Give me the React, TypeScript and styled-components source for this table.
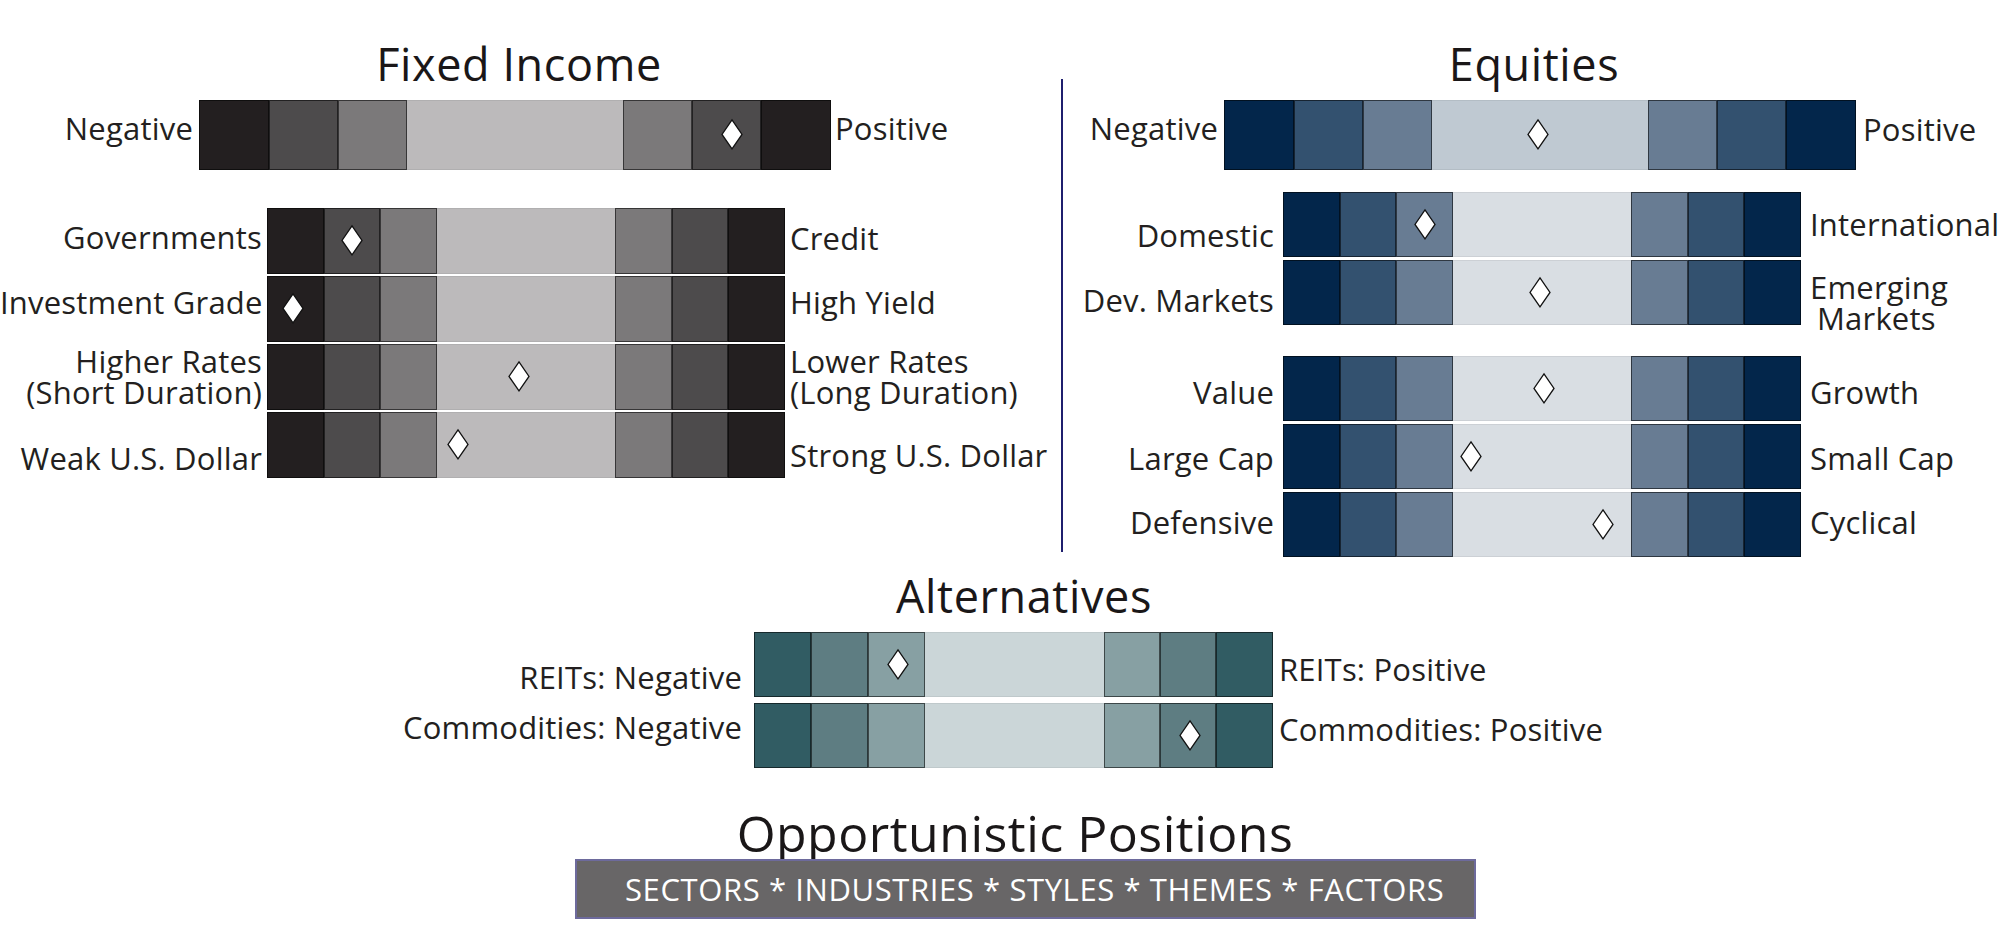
import type { ReactNode } from "react";
import styled, { createGlobalStyle } from "styled-components";

type Palette = { dark: string; mid: string; soft: string; center: string };

type Item = {
  left: ReactNode;
  right: ReactNode;
  seg: number;
  at: number;
  dyL?: number;
  dyR?: number;
};

const GREY: Palette = { dark: "#231f20", mid: "#4d4b4c", soft: "#7b797a", center: "#bcbabb" };
const NAVY_TOP: Palette = { dark: "#03264b", mid: "#33516f", soft: "#687c93", center: "#bfc9d2" };
const NAVY: Palette = { ...NAVY_TOP, center: "#d9dee3" };
const TEAL: Palette = { dark: "#315c63", mid: "#5e7d82", soft: "#87a0a3", center: "#cbd6d8" };

const WIDE = [70, 69, 69, 216, 69, 69, 70];
const NARROW = [57, 56, 57, 178, 57, 56, 57];
const ALT = [57, 57, 57, 179, 56, 56, 57];

const GlobalStyle = createGlobalStyle`
  html, body {
    margin: 0;
    padding: 0;
    background: #fff;
  }
  body {
    font-family: "Open Sans", "Liberation Sans", sans-serif;
    color: #231f20;
  }
`;

const StPage = styled.main`
  width: 2000px;
  height: 940px;
  overflow: hidden;
  display: flex;
  flex-direction: column;
  background: #fff;
`;

const StTopRow = styled.div`
  display: flex;
  align-items: flex-start;
  padding-top: 38px;
`;

const StPanel = styled.section<{ $w?: number }>`
  display: flex;
  flex-direction: column;
  ${({ $w }) => ($w ? `width: ${$w}px; flex-shrink: 0;` : "flex: 1; min-width: 0;")}
`;

const StDivider = styled.div`
  flex-shrink: 0;
  width: 2px;
  height: 473px;
  margin-top: 41px;
  background: #1f1f6e;
`;

const StSection = styled.section<{ $top: number }>`
  display: flex;
  flex-direction: column;
  margin-top: ${({ $top }) => $top}px;
`;

const StTitle = styled.h2<{ $nudge: number }>`
  margin: 0;
  font-size: 45px;
  font-weight: 400;
  line-height: 52px;
  letter-spacing: 0.6px;
  text-align: center;
  color: #1a1718;
  padding-left: ${({ $nudge }) => Math.max(0, $nudge)}px;
  padding-right: ${({ $nudge }) => Math.max(0, -$nudge)}px;
`;

const StBigTitle = styled(StTitle)`
  font-size: 50px;
  line-height: 50px;
  letter-spacing: 0.5px;
`;

const StStack = styled.div<{ $top: number; $gap: number }>`
  display: flex;
  flex-direction: column;
  gap: ${({ $gap }) => $gap}px;
  margin-top: ${({ $top }) => $top}px;
`;

const StRow = styled.div<{ $left: number }>`
  display: grid;
  grid-template-columns: ${({ $left }) => $left}px auto 1fr;
  align-items: center;
`;

const StLabel = styled.div<{ $align: "left" | "right"; $dy: number; $gap: number }>`
  font-size: 31px;
  line-height: 31px;
  letter-spacing: 0.2px;
  white-space: nowrap;
  text-align: ${({ $align }) => $align};
  color: #231f20;
  padding-${({ $align }) => ($align === "right" ? "right" : "left")}: ${({ $gap }) => $gap}px;
  transform: translateY(${({ $dy }) => $dy}px);
`;

const StIndent = styled.span`
  display: inline-block;
  padding-left: 7px;
`;

const StBar = styled.div<{ $h: number }>`
  position: relative;
  display: flex;
  height: ${({ $h }) => $h}px;
`;

const StSegment = styled.div<{ $w: number; $color: string; $middle: boolean }>`
  box-sizing: border-box;
  width: ${({ $w }) => $w}px;
  height: 100%;
  background: ${({ $color }) => $color};
  border: 1px solid ${({ $middle }) => ($middle ? "rgba(0, 0, 0, 0.06)" : "rgba(0, 0, 0, 0.55)")};
  ${({ $middle }) => ($middle ? "border-left: none; border-right: none;" : "")}
`;

const StMarker = styled.svg`
  position: absolute;
  top: 50%;
  width: 22px;
  height: 31px;
  margin-left: -11px;
  transform: translateY(-52%);
  overflow: visible;

  polygon {
    fill: #fff;
    stroke: #111;
    stroke-width: 1.3;
    stroke-linejoin: miter;
  }
`;

const StBanner = styled.div`
  box-sizing: border-box;
  align-self: flex-start;
  margin-left: 575px;
  margin-top: 1px;
  width: 901px;
  height: 60px;
  padding-left: 48px;
  display: flex;
  align-items: center;
  background: #686667;
  border: 2px solid #6d6a9c;
  color: #fff;
  font-size: 31px;
  letter-spacing: 0.6px;
  white-space: nowrap;
`;

function Scale({
  widths,
  palette,
  seg,
  at,
  height,
}: {
  widths: number[];
  palette: Palette;
  seg: number;
  at: number;
  height: number;
}) {
  const tones = [palette.dark, palette.mid, palette.soft, palette.center, palette.soft, palette.mid, palette.dark];
  const x = widths.slice(0, seg).reduce((a, b) => a + b, 0) + widths[seg] * at;
  return (
    <StBar $h={height}>
      {widths.map((w, i) => (
        <StSegment key={i} $w={w} $color={tones[i]} $middle={i === 3} />
      ))}
      <StMarker viewBox="0 0 22 31" style={{ left: x }}>
        <polygon points="11,1 21,15.5 11,30 1,15.5" />
      </StMarker>
    </StBar>
  );
}

function ScaleRows({
  items,
  widths,
  palette,
  height,
  leftCol,
  gapL,
  gapR,
}: {
  items: Item[];
  widths: number[];
  palette: Palette;
  height: number;
  leftCol: number;
  gapL: number;
  gapR: number;
}) {
  return (
    <>
      {items.map((it, i) => (
        <StRow key={i} $left={leftCol}>
          <StLabel $align="right" $dy={it.dyL ?? 0} $gap={gapL}>
            {it.left}
          </StLabel>
          <Scale widths={widths} palette={palette} seg={it.seg} at={it.at} height={height} />
          <StLabel $align="left" $dy={it.dyR ?? 0} $gap={gapR}>
            {it.right}
          </StLabel>
        </StRow>
      ))}
    </>
  );
}

const fixedTop: Item[] = [{ left: "Negative", right: "Positive", seg: 5, at: 0.58, dyL: -7, dyR: -7 }];

const fixedRows: Item[] = [
  { left: "Governments", right: "Credit", seg: 1, at: 0.5, dyL: -4, dyR: -3 },
  { left: "Investment Grade", right: "High Yield", seg: 0, at: 0.45, dyL: -7, dyR: -7 },
  {
    left: (
      <>
        Higher Rates
        <br />
        (Short Duration)
      </>
    ),
    right: (
      <>
        Lower Rates
        <br />
        (Long Duration)
      </>
    ),
    seg: 3,
    at: 0.46,
  },
  { left: "Weak U.S. Dollar", right: "Strong U.S. Dollar", seg: 3, at: 0.12, dyL: 13, dyR: 10 },
];

const eqTop: Item[] = [{ left: "Negative", right: "Positive", seg: 3, at: 0.49, dyL: -7, dyR: -6 }];

const eqRegion: Item[] = [
  { left: "Domestic", right: "International", seg: 2, at: 0.5, dyL: 11, dyR: 0 },
  {
    left: "Dev. Markets",
    right: (
      <>
        Emerging
        <br />
        <StIndent>Markets</StIndent>
      </>
    ),
    seg: 3,
    at: 0.49,
    dyL: 8,
    dyR: 10,
  },
];

const eqStyle: Item[] = [
  { left: "Value", right: "Growth", seg: 3, at: 0.51, dyL: 4, dyR: 4 },
  { left: "Large Cap", right: "Small Cap", seg: 3, at: 0.1, dyL: 2, dyR: 2 },
  { left: "Defensive", right: "Cyclical", seg: 3, at: 0.84, dyL: -2, dyR: -2 },
];

const altRows: Item[] = [
  { left: "REITs: Negative", right: "REITs: Positive", seg: 2, at: 0.52, dyL: 13, dyR: 5 },
  { left: "Commodities: Negative", right: "Commodities: Positive", seg: 5, at: 0.54, dyL: -8, dyR: -6 },
];

export default function App() {
  return (
    <>
      <GlobalStyle />
      <StPage>
        <StTopRow>
          <StPanel $w={1061}>
            <StTitle $nudge={-23}>Fixed Income</StTitle>
            <StStack $top={10} $gap={0}>
              <ScaleRows items={fixedTop} widths={WIDE} palette={GREY} height={70} leftCol={199} gapL={6} gapR={4} />
            </StStack>
            <StStack $top={38} $gap={2}>
              <ScaleRows items={fixedRows} widths={NARROW} palette={GREY} height={66} leftCol={267} gapL={5} gapR={5} />
            </StStack>
          </StPanel>
          <StDivider />
          <StPanel>
            <StTitle $nudge={5}>Equities</StTitle>
            <StStack $top={10} $gap={0}>
              <ScaleRows items={eqTop} widths={WIDE} palette={NAVY_TOP} height={70} leftCol={161} gapL={6} gapR={7} />
            </StStack>
            <StStack $top={22} $gap={3}>
              <ScaleRows items={eqRegion} widths={NARROW} palette={NAVY} height={65} leftCol={220} gapL={9} gapR={9} />
            </StStack>
            <StStack $top={31} $gap={3}>
              <ScaleRows items={eqStyle} widths={NARROW} palette={NAVY} height={65} leftCol={220} gapL={9} gapR={9} />
            </StStack>
          </StPanel>
        </StTopRow>

        <StSection $top={13}>
          <StTitle $nudge={48}>Alternatives</StTitle>
          <StStack $top={10} $gap={6}>
            <ScaleRows items={altRows} widths={ALT} palette={TEAL} height={65} leftCol={754} gapL={12} gapR={6} />
          </StStack>
        </StSection>

        <StSection $top={40}>
          <StBigTitle $nudge={30}>Opportunistic Positions</StBigTitle>
          <StBanner>SECTORS * INDUSTRIES * STYLES * THEMES * FACTORS</StBanner>
        </StSection>
      </StPage>
    </>
  );
}
